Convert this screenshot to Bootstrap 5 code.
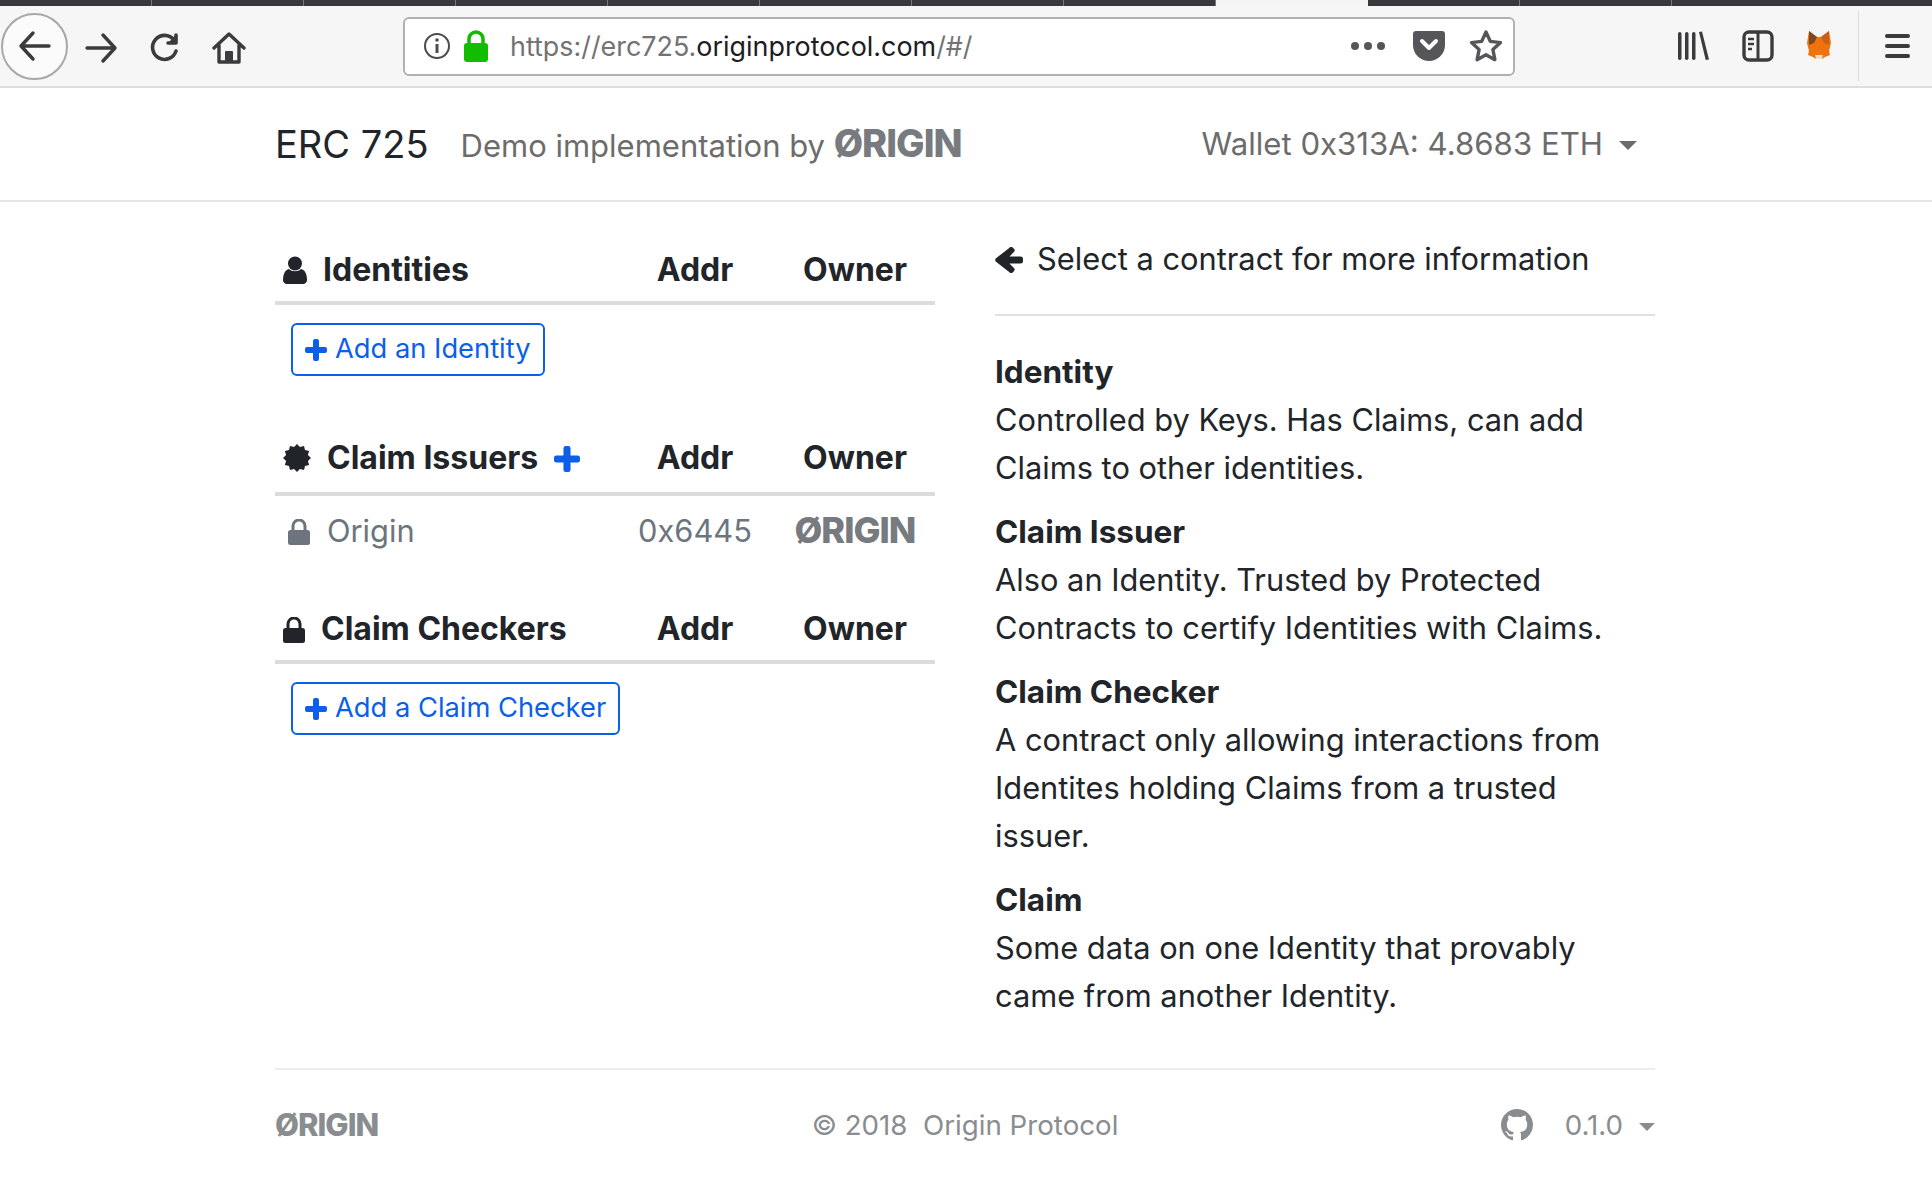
<!DOCTYPE html>
<html lang="en">
<head>
    <meta charset="UTF-8">
    <title>ERC 725</title>
    <link href="https://cdn.jsdelivr.net/npm/bootstrap@5.3.0/dist/css/bootstrap.min.css" rel="stylesheet">
    <style>
        body {
            font-family: Inter, "Liberation Sans", sans-serif;
            font-size: 30.8px;
            line-height: 48px;
            color: #212529;
            background: #fff;
        }

        /* browser chrome */
        .tab-strip { height: 6px; background: #38383d; }
        .tab-seg { width: 152px; border-right: 1px solid #77777c; }
        .tab-seg.on { background: #f5f5f5; border: 0; }
        .tool-bar { height: 82px; background: #f6f6f6; border-bottom: 2px solid #dedede; padding-left: 1px; }
        .back-ring {
            width: 67px; height: 67px; border: 2px solid #a8a8a8; border-radius: 50%;
            background: #fbfbfb; margin-right: 1px;
        }
        .tool-btn { width: 64px; margin-top: -2px; }
        .url-bar {
            width: 1112px; height: 59px; margin-left: 142px; padding: 0 10px 0 18px;
            background: #fff; border: 2px solid #b1b1b3; border-radius: 6px;
            font-size: 26.9px; line-height: 1; color: #737373;
        }
        .url-bar b { font-weight: 400; color: #1d1d1f; }
        .lock-icon { margin-right: 21px; }
        .side-tools { margin-left: auto; }
        .side-tools .gap-item { margin-left: 32px; }
        .side-tools .sep { width: 1px; height: 70px; background: #dcdcdc; margin-left: 26px; }
        .side-tools .menu-icon { margin: 0 22px 0 26px; }

        /* app navbar */
        .top-nav { height: 114px; padding: 0; border-bottom: 2px solid #e6e6e6; }
        .page-wrap { width: 1380px; margin-left: 275px; }
        .top-nav .navbar-brand { font-size: 38px; margin-right: 32px; padding: 0; color: #212529; }
        .top-nav .navbar-text { color: #6c6c6c; padding: 0; font-size: 31px; }
        .top-nav .nav-link { color: #6c6c6c; padding: 0; font-size: 31.2px; }
        .logo-word { font-weight: 800; letter-spacing: -1px; color: #777b80; }
        .top-nav .logo-word { font-size: 38px; }
        .top-nav .dropdown-toggle::after { margin-left: 16px; vertical-align: 5px; }
        .wallet-item { margin-right: 10px; }

        /* contracts */
        .content-row { display: flex; gap: 60px; }
        .content-col { width: 660px; }
        .contract-table { width: 660px; margin-bottom: 0; table-layout: fixed; }
        .contract-table th, .contract-table td { padding: 0; text-align: center; }
        .contract-table th {
            height: 101px; padding-bottom: 7px; vertical-align: bottom;
            font-size: 32px; font-weight: 700; border-bottom: 4px solid #dcdcdc; line-height: 48px;
        }
        .contract-table td { height: 71px; vertical-align: middle; color: #6c757d; }
        .contract-table .name-cell { text-align: left; padding-left: 8px; }
        .contract-table .short-cell { width: 160px; }
        .contract-table td.name-cell { padding-left: 13px; }
        .name-cell svg { margin-right: 16px; vertical-align: -3px; }
        .contract-table td.name-cell svg { margin-right: 17px; }
        .contract-table td .logo-word { font-size: 36px; }
        .add-plus { margin-left: 16px; margin-right: 0 !important; }
        .add-btn {
            display: inline-flex; align-items: center; gap: 8px;
            height: 53px; margin: 18px 0 0 16px; padding: 0 12px;
            border-width: 2px; border-radius: 6px; font-size: 27.3px; color: #0b5fe8; border-color: #0b5fe8;
        }
        .issuers-block { margin-top: 14px; }
        .issuers-block th { height: 104px; padding-bottom: 10px; }
        .checkers-block { margin-top: -4px; }

        /* help text */
        .help-head { height: 81px; margin-top: 33px; border-bottom: 2px solid #e2e2e2; line-height: 48px; }
        .help-head svg { margin-right: 14px; vertical-align: -3px; }
        .help-list { margin: 32px 0 0; }
        .help-list dt { font-size: 31.5px; font-weight: 700; margin-top: 16px; }
        .help-list dt:first-child { margin-top: 0; }
        .help-list dd { margin: 0; }

        .foot-bar {
            margin-top: 48px; height: 112px; border-top: 2px solid #ececec;
            font-size: 27.7px; color: #8a8d90;
        }
        .foot-bar > div { flex: 1 1 0; }
        .foot-bar .logo-word { font-size: 31px; color: #8a8d90; letter-spacing: -1px; }
        .foot-bar .dropdown-toggle::after { margin-left: 16px; vertical-align: 4px; }
        .git-icon { margin-right: 32px; }
    </style>
</head>
<body>
    <div class="tab-strip d-flex">
        <div class="tab-seg"></div><div class="tab-seg"></div><div class="tab-seg"></div><div class="tab-seg"></div>
        <div class="tab-seg"></div><div class="tab-seg"></div><div class="tab-seg"></div><div class="tab-seg"></div>
        <div class="tab-seg on"></div><div class="tab-seg"></div><div class="tab-seg"></div>
    </div>
    <div class="tool-bar d-flex align-items-center">
        <div class="back-ring d-flex align-items-center justify-content-center">
            <svg width="34" height="32" viewBox="0 0 34 32" fill="none" stroke="#3b3b3d" stroke-width="3.4" stroke-linecap="round" stroke-linejoin="round"><path d="M3 16h28M15 3 3 16l12 13"/></svg>
        </div>
        <div class="tool-btn text-center">
            <svg width="34" height="32" viewBox="0 0 34 32" fill="none" stroke="#3b3b3d" stroke-width="3.4" stroke-linecap="round" stroke-linejoin="round"><path d="M31 16H3M19 3l12 13-12 13"/></svg>
        </div>
        <div class="tool-btn text-center">
            <svg width="32" height="32" viewBox="0 0 32 32" fill="none" stroke="#3b3b3d" stroke-width="3.6" stroke-linecap="round" stroke-linejoin="round"><path d="M27 19a12 12 0 1 1-2-11"/><path d="M27 3v8h-8" fill="#3b3b3d"/></svg>
        </div>
        <div class="tool-btn text-center">
            <svg width="34" height="34" viewBox="0 0 34 34" fill="none" stroke="#3b3b3d" stroke-width="3.4" stroke-linejoin="round" stroke-linecap="round"><path d="M2 17 17 3l15 14M7 14v17h20V14"/><path d="M14 31V21h6v10" fill="#3b3b3d" stroke-width="2"/></svg>
        </div>
        <div class="url-bar d-flex align-items-center">
            <svg class="me-2" width="28" height="28" viewBox="0 0 28 28" fill="none" stroke="#4a4a4f" stroke-width="2"><circle cx="14" cy="14" r="12"/><path d="M14 12v9" stroke-width="3"/><circle cx="14" cy="8" r="1.8" fill="#4a4a4f" stroke="none"/></svg>
            <svg class="lock-icon ms-1" width="26" height="32" viewBox="0 0 26 32"><path d="M6 14V9a7 7 0 0 1 14 0v5" fill="none" stroke="#12bc00" stroke-width="3.5"/><rect x="1" y="13" width="24" height="19" rx="3" fill="#12bc00"/></svg>
            <span>https://erc725.<b>originprotocol.com</b>/#/</span>
            <div class="ms-auto d-flex align-items-center gap-3">
                <svg class="me-2" width="34" height="8" viewBox="0 0 34 8" fill="#55555a"><circle cx="4" cy="4" r="4"/><circle cx="17" cy="4" r="4"/><circle cx="30" cy="4" r="4"/></svg>
                <svg class="ms-1" width="32" height="30" viewBox="0 0 32 30"><path d="M3 0h26a3 3 0 0 1 3 3v11a16 16 0 0 1-32 0V3a3 3 0 0 1 3-3z" fill="#55555a"/><path d="M9 10l7 7 7-7" fill="none" stroke="#fff" stroke-width="4" stroke-linecap="round" stroke-linejoin="round"/></svg>
                <svg class="ms-2" width="34" height="34" viewBox="0 0 34 34" fill="none" stroke="#55555a" stroke-width="3.4" stroke-linejoin="round"><path d="m17 3 4.3 9.4 10.2 1.2-7.6 7 2 10.1-8.9-5-8.9 5 2-10.1-7.6-7 10.2-1.2z"/></svg>
            </div>
        </div>
        <div class="side-tools d-flex align-items-center">
            <svg width="32" height="30" viewBox="0 0 32 30" fill="#3b3b3d"><rect x="0" y="1" width="3.5" height="28" rx="1.7"/><rect x="7" y="1" width="3.5" height="28" rx="1.7"/><rect x="14" y="1" width="3.5" height="28" rx="1.7"/><path d="m21 1 3-.6 7 28-3.3.6z"/></svg>
            <svg class="gap-item" width="32" height="32" viewBox="0 0 32 32" fill="none" stroke="#3b3b3d" stroke-width="3.4"><rect x="2" y="2" width="28" height="28" rx="5"/><path d="M16 2v28" stroke-width="3"/><path d="M6 9h6M6 14h6M6 19h4" stroke-width="2.4"/></svg>
            <svg class="gap-item" width="26" height="30" viewBox="0 0 26 30"><path d="M3 0l8 6h4l8-6 2 12-2 8 1 4-5 2-3 2h-6l-3-2-5-2 1-4-2-8z" fill="#f0720f"/><path d="M3 0l8 6-3 6-5 2z" fill="#7c4a1e"/><path d="M23 0l-8 6 3 6 5 2z" fill="#c9601a"/><path d="M9 24h8l-1 4h-6z" fill="#efdcc7"/></svg>
            <div class="sep"></div>
            <svg class="menu-icon" width="25" height="24" viewBox="0 0 25 24" fill="#3b3b3d"><rect width="25" height="4" rx="2"/><rect y="10" width="25" height="4" rx="2"/><rect y="20" width="25" height="4" rx="2"/></svg>
        </div>
    </div>

    <nav class="navbar navbar-expand top-nav">
        <div class="page-wrap d-flex align-items-center">
            <a class="navbar-brand" href="#">ERC 725</a>
            <span class="navbar-text">Demo implementation by <span class="logo-word">ØRIGIN</span></span>
            <ul class="navbar-nav ms-auto">
                <li class="nav-item dropdown wallet-item">
                    <a class="nav-link dropdown-toggle" href="#">Wallet 0x313A: 4.8683 ETH</a>
                </li>
            </ul>
        </div>
    </nav>

    <div class="page-wrap">
        <div class="content-row">
            <div class="content-col">
                <table class="table table-borderless contract-table">
                    <thead><tr>
                        <th class="name-cell">
                            <svg width="24" height="28" viewBox="0 0 24 28" fill="#212529"><circle cx="12" cy="7.5" r="7"/><path d="M0 24c0-6 2-10 6-11 3 3 9 3 12 0 4 1 6 5 6 11 0 2-1.5 4-4 4H4c-2.5 0-4-2-4-4z"/></svg>Identities
                        </th>
                        <th class="short-cell">Addr</th>
                        <th class="short-cell">Owner</th>
                    </tr></thead>
                </table>
                <a class="btn btn-outline-primary add-btn" href="#">
                    <svg width="22" height="22" viewBox="0 0 22 22" fill="currentColor"><path d="M8 2a2 2 0 0 1 2-2h2a2 2 0 0 1 2 2v6h6a2 2 0 0 1 2 2v2a2 2 0 0 1-2 2h-6v6a2 2 0 0 1-2 2h-2a2 2 0 0 1-2-2v-6H2a2 2 0 0 1-2-2v-2a2 2 0 0 1 2-2h6z"/></svg>Add an Identity
                </a>

                <table class="table table-borderless contract-table issuers-block">
                    <thead><tr>
                        <th class="name-cell">
                            <svg width="28" height="28" viewBox="0 0 28 28" fill="#212529"><polygon points="14,0 16.92,3.08 21,1.88 22,6 26.12,7 24.92,11.08 28,14 24.92,16.92 26.12,21 22,22 21,26.12 16.92,24.92 14,28 11.08,24.92 7,26.12 6,22 1.88,21 3.08,16.92 0,14 3.08,11.08 1.88,7 6,6 7,1.88 11.08,3.08"/></svg>Claim Issuers<svg class="add-plus" width="26" height="26" viewBox="0 0 22 22" fill="#0b5fe8"><path d="M8 2a2 2 0 0 1 2-2h2a2 2 0 0 1 2 2v6h6a2 2 0 0 1 2 2v2a2 2 0 0 1-2 2h-6v6a2 2 0 0 1-2 2h-2a2 2 0 0 1-2-2v-6H2a2 2 0 0 1-2-2v-2a2 2 0 0 1 2-2h6z"/></svg>
                        </th>
                        <th class="short-cell">Addr</th>
                        <th class="short-cell">Owner</th>
                    </tr></thead>
                    <tbody><tr>
                        <td class="name-cell">
                            <svg width="22" height="26" viewBox="0 0 22 26" fill="#6c757d"><path d="M5 12V7a6 6 0 0 1 12 0v5" fill="none" stroke="#6c757d" stroke-width="3"/><rect y="11" width="22" height="15" rx="2.5"/></svg>Origin
                        </td>
                        <td>0x6445</td>
                        <td><span class="logo-word">ØRIGIN</span></td>
                    </tr></tbody>
                </table>

                <table class="table table-borderless contract-table checkers-block">
                    <thead><tr>
                        <th class="name-cell">
                            <svg width="22" height="26" viewBox="0 0 22 26" fill="#212529"><path d="M5 12V7a6 6 0 0 1 12 0v5" fill="none" stroke="#212529" stroke-width="3"/><rect y="11" width="22" height="15" rx="2.5"/></svg>Claim Checkers
                        </th>
                        <th class="short-cell">Addr</th>
                        <th class="short-cell">Owner</th>
                    </tr></thead>
                </table>
                <a class="btn btn-outline-primary add-btn" href="#">
                    <svg width="22" height="22" viewBox="0 0 22 22" fill="currentColor"><path d="M8 2a2 2 0 0 1 2-2h2a2 2 0 0 1 2 2v6h6a2 2 0 0 1 2 2v2a2 2 0 0 1-2 2h-6v6a2 2 0 0 1-2 2h-2a2 2 0 0 1-2-2v-6H2a2 2 0 0 1-2-2v-2a2 2 0 0 1 2-2h6z"/></svg>Add a Claim Checker
                </a>
            </div>

            <div class="content-col">
                <div class="help-head">
                    <svg width="28" height="26" viewBox="0 0 28 26" fill="#212529"><path d="M14.5.7a2.4 2.4 0 0 1 3.4 0l1 1a2.4 2.4 0 0 1 0 3.4L14.5 9.5h11a2.5 2.5 0 0 1 2.5 2.500v2a2.5 2.5 0 0 1-2.5 2.5h-11l4.400 4.400a2.400 2.400 0 0 1 0 3.400l-1 1a2.400 2.400 0 0 1-3.400 0L1 14.700a2.400 2.400 0 0 1 0-3.400z"/></svg>Select a contract for more information
                </div>
                <dl class="help-list">
                    <dt>Identity</dt>
                    <dd>Controlled by Keys. Has Claims, can add<br>Claims to other identities.</dd>
                    <dt>Claim Issuer</dt>
                    <dd>Also an Identity. Trusted by Protected<br>Contracts to certify Identities with Claims.</dd>
                    <dt>Claim Checker</dt>
                    <dd>A contract only allowing interactions from<br>Identites holding Claims from a trusted<br>issuer.</dd>
                    <dt>Claim</dt>
                    <dd>Some data on one Identity that provably<br>came from another Identity.</dd>
                </dl>
            </div>
        </div>

        <div class="foot-bar d-flex align-items-center">
            <div><span class="logo-word">ØRIGIN</span></div>
            <div class="text-center">© 2018&nbsp; Origin Protocol</div>
            <div class="d-flex justify-content-end align-items-center">
                <svg class="git-icon" width="32" height="32" viewBox="0 0 16 16" fill="#8a8d90"><path d="M8 0C3.58 0 0 3.58 0 8c0 3.54 2.29 6.53 5.47 7.59.4.07.55-.17.55-.38 0-.19-.01-.82-.01-1.49-2.01.37-2.53-.49-2.69-.94-.09-.23-.48-.94-.82-1.13-.28-.15-.68-.52-.01-.53.63-.01 1.08.58 1.23.82.72 1.21 1.87.87 2.33.66.07-.52.28-.87.51-1.07-1.78-.2-3.64-.89-3.64-3.95 0-.87.31-1.59.82-2.15-.08-.2-.36-1.02.08-2.12 0 0 .67-.21 2.2.82.64-.18 1.32-.27 2-.27.68 0 1.36.09 2 .27 1.53-1.04 2.2-.82 2.2-.82.44 1.1.16 1.92.08 2.12.51.56.82 1.27.82 2.15 0 3.07-1.87 3.75-3.65 3.95.29.25.54.73.54 1.48 0 1.07-.01 1.93-.01 2.2 0 .21.15.46.55.38A8.013 8.013 0 0016 8c0-4.42-3.58-8-8-8z"/></svg>
                <span class="dropdown-toggle">0.1.0</span>
            </div>
        </div>
    </div>

    <script src="https://cdn.jsdelivr.net/npm/bootstrap@5.3.0/dist/js/bootstrap.bundle.min.js"></script>
</body>
</html>
